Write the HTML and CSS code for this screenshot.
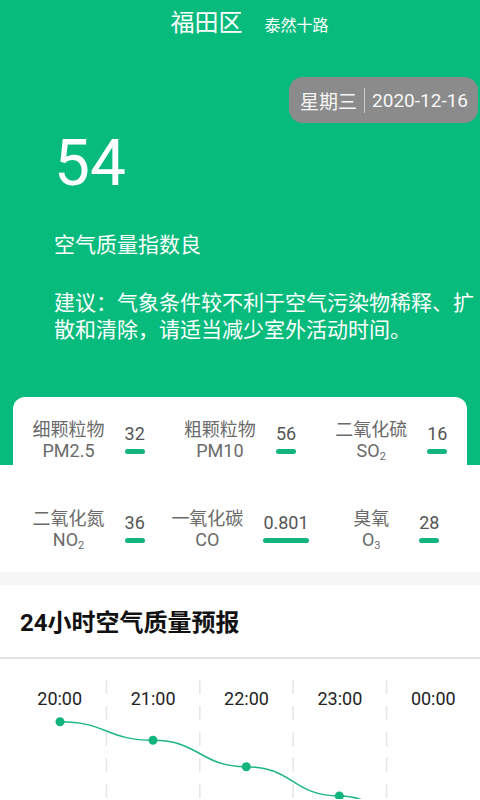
FILE: index.html
```html
<!DOCTYPE html>
<html lang="zh-CN">
<head>
    <meta charset="UTF-8">
    <meta name="viewport" content="width=device-width, initial-scale=1.0">
    <title>空气质量</title>
    <link rel="stylesheet" href="styles.css">
</head>
<body>
    <div class="top">
        <header class="title-bar">
            <span class="city">福田区</span>
            <span class="street">泰然十路</span>
        </header>
        <div class="date-row">
            <div class="date-badge">
                <span>星期三</span>
                <i class="sep"></i>
                <span>2020-12-16</span>
            </div>
        </div>
        <div class="summary">
            <div class="aqi">54</div>
            <p class="aqi-level">空气质量指数良</p>
            <p class="advice">建议：气象条件较不利于空气污染物稀释、扩散和清除，请适当减少室外活动时间。</p>
        </div>
    </div>

    <!-- pollutant grid -->
    <section class="pollutants">
        <div class="cell">
            <div class="name">细颗粒物<br>PM2.5</div>
            <div class="value"><span>32</span><i class="bar"></i></div>
        </div>
        <div class="cell">
            <div class="name">粗颗粒物<br>PM10</div>
            <div class="value"><span>56</span><i class="bar"></i></div>
        </div>
        <div class="cell">
            <div class="name">二氧化硫<br>SO<sub>2</sub></div>
            <div class="value"><span>16</span><i class="bar"></i></div>
        </div>
        <div class="cell">
            <div class="name">二氧化氮<br>NO<sub>2</sub></div>
            <div class="value"><span>36</span><i class="bar"></i></div>
        </div>
        <div class="cell">
            <div class="name">一氧化碳<br>CO</div>
            <div class="value"><span>0.801</span><i class="bar"></i></div>
        </div>
        <div class="cell">
            <div class="name">臭氧<br>O<sub>3</sub></div>
            <div class="value"><span>28</span><i class="bar"></i></div>
        </div>
    </section>

    <div class="band"></div>

    <section class="forecast">
        <h2>24小时空气质量预报</h2>
        <svg class="chart" width="467" height="140" viewBox="0 0 467 140">
            <g class="grid">
                <line x1="93.4" y1="21" x2="93.4" y2="140"/>
                <line x1="186.8" y1="21" x2="186.8" y2="140"/>
                <line x1="280.2" y1="21" x2="280.2" y2="140"/>
                <line x1="373.6" y1="21" x2="373.6" y2="140"/>
            </g>
            <g class="hours">
                <text x="46.7" y="45.5">20:00</text>
                <text x="140.1" y="45.5">21:00</text>
                <text x="233.5" y="45.5">22:00</text>
                <text x="326.9" y="45.5">23:00</text>
                <text x="420.3" y="45.5">00:00</text>
            </g>
            <path class="line" d="M47 62.7 C93.5 62.7 93.5 81.3 140 81.3 C186.7 81.3 186.7 107.7 233.3 107.7 C279.8 107.7 279.8 137 326.3 137 C373 137 373 176 420 176"/>
            <g class="dots">
                <circle cx="47" cy="62.7" r="4.5"/>
                <circle cx="140" cy="81.3" r="4.5"/>
                <circle cx="233.3" cy="107.7" r="4.5"/>
                <circle cx="326.3" cy="137" r="4.5"/>
            </g>
        </svg>
    </section>
</body>
</html>
```

FILE: styles.css
```css
html {
    background: #fff;
}

body {
    margin: 0;
    width: 480px;
    height: 800px;
    overflow: hidden;
    font-family: Roboto, "Noto Sans CJK SC", sans-serif;
    background: linear-gradient(to bottom, #06bb7c 0, #06bb7c 465px, #fff 465px);
}

.top {
    color: #fff;
}

.title-bar {
    height: 46px;
    display: flex;
    align-items: baseline;
    justify-content: center;
    gap: 22px;
    padding-left: 19px;
    line-height: 46px;
}

.city {
    font-size: 24px;
}

.street {
    font-size: 16px;
}

.date-row {
    display: flex;
    justify-content: flex-end;
    padding-right: 2px;
    margin-top: 31px;
}

.date-badge {
    height: 46px;
    display: flex;
    align-items: center;
    gap: 7px;
    padding: 0 10px 0 11px;
    background: #8b8b8b;
    border-radius: 14px;
    color: #f6f6f6;
    font-size: 19px;
}

.date-badge .sep {
    width: 1px;
    height: 25px;
    background: rgba(255, 255, 255, 0.55);
}

.summary {
    padding-left: 54px;
}

.aqi {
    margin-top: 9px;
    font-size: 64px;
    font-weight: 400;
    line-height: 64px;
}

.aqi-level {
    margin: 36px 0 0;
    font-size: 21px;
    line-height: 27px;
}

.advice {
    margin: 31px 0 0;
    font-size: 21px;
    line-height: 27px;
}

.pollutants {
    margin: 53px 13px 0;
    padding: 22px 0 22px;
    background: #fff;
    border-radius: 12px 12px 0 0;
    display: grid;
    grid-template-columns: repeat(3, 1fr);
    row-gap: 47px;
}

.cell {
    display: flex;
    justify-content: center;
    gap: 20px;
}

.name {
    min-width: 56px;
    text-align: center;
    font-size: 18px;
    line-height: 21px;
    color: #6a6a6a;
}

.name sub {
    font-size: 11px;
    line-height: 0;
    vertical-align: -3px;
}

.value {
    display: flex;
    flex-direction: column;
    padding-top: 4px;
    font-size: 18px;
    line-height: 21px;
    color: #555;
}

.bar {
    display: block;
    height: 5px;
    margin-top: 5px;
    border-radius: 3px;
    background: #13b47f;
}

.band {
    height: 13px;
    background: #f6f6f6;
}

.forecast h2 {
    margin: 0;
    padding: 22px 20px 18px;
    font-size: 24px;
    line-height: 32px;
    font-weight: 700;
    color: #111;
    border-bottom: 2px solid #e2e2e2;
}

.chart {
    display: block;
    margin-left: 13px;
}

.chart .grid line {
    stroke: #e6e6e6;
    stroke-width: 1.5;
    stroke-dasharray: 14 12;
}

.chart .hours text {
    font-family: Roboto, sans-serif;
    font-size: 18px;
    fill: #222;
    text-anchor: middle;
}

.chart .line {
    fill: none;
    stroke: #1db584;
    stroke-width: 1.5;
}

.chart .dots circle {
    fill: #14b47f;
}
```
